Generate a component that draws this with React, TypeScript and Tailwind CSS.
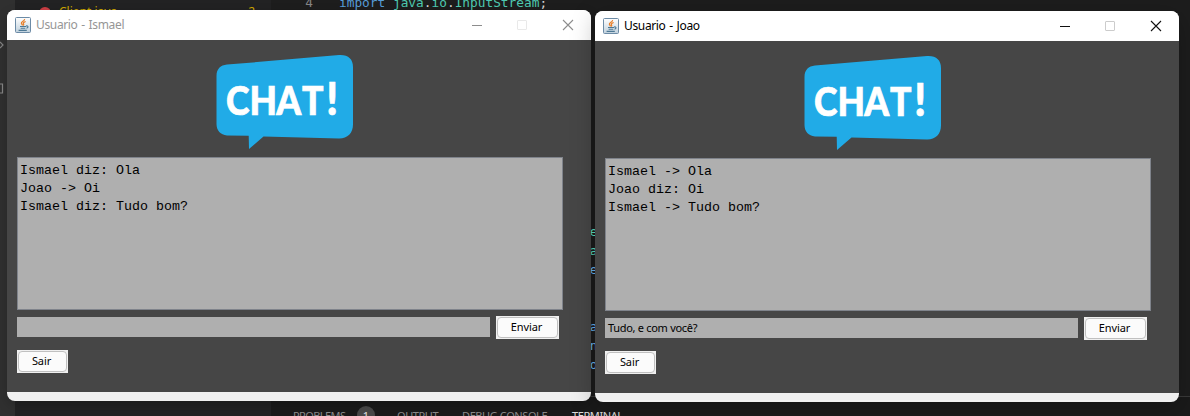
import React from "react";

function JavaIcon() {
  return (
    <svg width="16" height="16" viewBox="0 0 16 16" className="shrink-0">
      <defs>
        <linearGradient id="jbg" x1="0" y1="0" x2="0" y2="1">
          <stop offset="0" stopColor="#ffffff" />
          <stop offset="1" stopColor="#bfd0dc" />
        </linearGradient>
      </defs>
      <rect x="0.5" y="0.5" width="15" height="15" rx="1" fill="url(#jbg)" stroke="#6c8ba6" />
      <path d="M9.6 2C10 3.9 5.8 4.7 6.4 6.4C6.6 7.1 7.2 7.6 7.6 8.4M10.7 4.5C8.9 5.1 7.9 5.9 8.5 6.8C8.9 7.4 8.7 8 8.2 8.5" fill="none" stroke="#e8802c" strokeWidth="1.3" />
      <path d="M5 9.5H11M5.6 11.3H10.3M3.6 13.4H11.8M11 9C13.6 8.3 13.5 10.8 11.5 11.2" fill="none" stroke="#4d7894" strokeWidth="1.1" />
    </svg>
  );
}

function ChatLogo() {
  return (
    <svg width="138" height="96" viewBox="0 0 138 96" role="img" aria-label="CHAT!">
      <path
        d="M11 11.6 L123 2.1 C132 1.5 137 6 137 14 V71.5 C137 80 131.5 85.7 123 85.6 L47.5 83.5 L33 96 L32.7 82.7 L11 82.4 C4.5 82 .5 77.5 .5 71 V23 C.5 16 4.5 12.2 11 11.6Z"
        fill="#21abe7"
      />
      <text
        y="62"
        x="11 37.2 67 95.5"
        transform="scale(0.9 1)"
        fill="#fff"
        stroke="#fff"
        strokeWidth="0.7"
        className="text-[39.5px] font-black [font-family:Lato,sans-serif]"
      >
        CHAT
        <tspan x="122.5" className="text-[46px]">!</tspan>
      </text>
    </svg>
  );
}

function CaptionButtons({ active }: { active: boolean }) {
  const ink = active ? "#111111" : "#8d8d8d";
  return (
    <svg width="106" height="14" viewBox="0 0 106 14" className="mb-px ml-auto mr-[16px]">
      <path d="M3 7.5H13" stroke={ink} />
      <rect x="48.5" y="2.5" width="9" height="9" rx="0.5" fill="none" stroke={active ? "#cccccc" : "#e9e9e9"} />
      <path d="M94 2L104 12M104 2L94 12" stroke={ink} strokeWidth="1.1" />
    </svg>
  );
}

function SwingButton({ label, width }: { label: string; width: string }) {
  return (
    <button className={`h-[23px] shrink-0 bg-[#f0f0f0] p-px ${width}`}>
      <span className="flex h-full items-center justify-center rounded-[4px] border border-[#c0c0c0] bg-[#fbfbfb] pb-[2px] pr-[2px] text-[11px] leading-none tracking-[-0.1px] text-black">
        {label}
      </span>
    </button>
  );
}

interface ChatWindowProps {
  user: string;
  messages: string[];
  draft: string;
  active: boolean;
  place: string;
}

function ChatWindow({ user, messages, draft, active, place }: ChatWindowProps) {
  return (
    <section
      className={`absolute flex h-[391px] w-[584px] flex-col overflow-hidden rounded-[8px] bg-[#f0f0f0] [font-family:'Noto_Sans','Open_Sans',sans-serif] ${place}`}
    >
      <header className="flex h-[30px] shrink-0 items-center bg-white pl-[8px]">
        <JavaIcon />
        <h1 className={`ml-[5px] text-[12px] leading-none tracking-[-0.35px] [word-spacing:1px] ${active ? "text-black" : "text-[#969696]"}`}>
          Usuario - {user}
        </h1>
        <CaptionButtons active={active} />
      </header>
      <main className="flex h-[352px] shrink-0 flex-col bg-[#464646] pl-[10px] pt-[13px]">
        <div className="h-[104px] pl-[199px]">
          <ChatLogo />
        </div>
        <div className="h-[153px] w-[546px] border border-[#7f838b] bg-[#afafaf] pl-[2px] pt-[4px] text-[13.333px] leading-[18px] text-black [font-family:'Liberation_Mono',monospace]">
          {messages.map((m) => (
            <p key={m} className="whitespace-pre">{m}</p>
          ))}
        </div>
        <div className="mt-[6px] flex items-start gap-[6px]">
          <div className="mt-px flex h-[20px] w-[473px] items-center bg-[#afafaf] pb-px pl-[3px] text-[11px] leading-none tracking-[-0.3px] text-black">
            {draft}
          </div>
          <SwingButton label="Enviar" width="w-[63px]" />
        </div>
        <div className="mt-[11px] flex">
          <SwingButton label="Sair" width="w-[51px]" />
        </div>
      </main>
    </section>
  );
}

function EditorBackdrop() {
  return (
    <div className="flex h-full overflow-hidden">
      <div className="flex w-[15px] shrink-0 flex-col bg-[#303030]">
        <svg width="7" height="100" viewBox="0 0 7 100" fill="none" stroke="#858585" strokeWidth="1.2">
          <path d="M0 42L3 45L0 48M0 84H2.5V93H0" />
        </svg>
      </div>
      <div className="w-[256px] shrink-0 bg-[#222223]">
        <div className="flex h-[24px] items-center pl-[24px] text-[12px] leading-none text-[#cca700] [font-family:'Noto_Sans',sans-serif]">
          <span className="mr-[8px] mt-[2px] size-[12px] shrink-0 rounded-full bg-[#cc3e44]" />
          <span>Client.java</span>
          <span className="ml-auto mr-[16px]">2</span>
        </div>
      </div>
      <div className="flex min-w-0 grow flex-col bg-[#1d1d1d]">
        <div className="flex h-[396px] shrink-0 flex-col overflow-hidden text-[12.8px] leading-[19px] [font-family:'DejaVu_Sans_Mono',monospace]">
          <div className="flex h-[12px] shrink-0 items-end whitespace-pre">
            <span className="w-[42px] text-right text-[#858585]">4</span>
            <span className="ml-[26px] text-[#569cd6]">import </span>
            <span className="text-[#4ec9b0]">java</span>
            <span className="text-[#d4d4d4]">.</span>
            <span className="text-[#4ec9b0]">io</span>
            <span className="text-[#d4d4d4]">.</span>
            <span className="text-[#4ec9b0]">InputStream</span>
            <span className="text-[#d4d4d4]">;</span>
          </div>
          <div className="flex flex-col pl-[311px] pt-[210px] text-[#5fe8cc]">
            <span>ne</span>
            <span>Fa</span>
            <span className="text-[#6cbcff]">se</span>
          </div>
          <div className="flex flex-col pl-[311px] pt-[38px] text-[#6cbcff]">
            <span>ea</span>
            <span>on</span>
            <span>ro</span>
          </div>
        </div>
        <div className="flex h-[37px] shrink-0 items-center border-t border-[#3a3a3a] bg-[#1a1a1a] pl-[22px] text-[11px] leading-none text-[#8b8b8b] [font-family:'Noto_Sans',sans-serif]">
          <span className="w-[64px] tracking-[-0.6px]">PROBLEMS</span>
          <span className="flex size-[18px] items-center justify-center rounded-full bg-[#484848] text-[#e4e4e4]">1</span>
          <span className="ml-[22px] w-[65px] tracking-[-0.4px]">OUTPUT</span>
          <span className="w-[110px] tracking-[-0.4px]">DEBUG CONSOLE</span>
          <span className="tracking-[-0.4px] text-[#e0e0e0]">TERMINAL</span>
        </div>
      </div>
    </div>
  );
}

export default function App() {
  return (
    <div className="relative h-[416px] w-[1190px] overflow-hidden bg-[#1d1d1d]">
      <EditorBackdrop />
      <ChatWindow
        user="Ismael"
        active={false}
        place="left-[7px] top-[10px] shadow-[0_4px_12px_rgba(0,0,0,0.2)]"
        messages={["Ismael diz: Ola", "Joao -> Oi", "Ismael diz: Tudo bom?"]}
        draft=""
      />
      <ChatWindow
        user="Joao"
        active
        place="left-[595px] top-[11px] shadow-[0_6px_24px_rgba(0,0,0,0.25)]"
        messages={["Ismael -> Ola", "Joao diz: Oi", "Ismael -> Tudo bom?"]}
        draft="Tudo, e com você?"
      />
    </div>
  );
}
